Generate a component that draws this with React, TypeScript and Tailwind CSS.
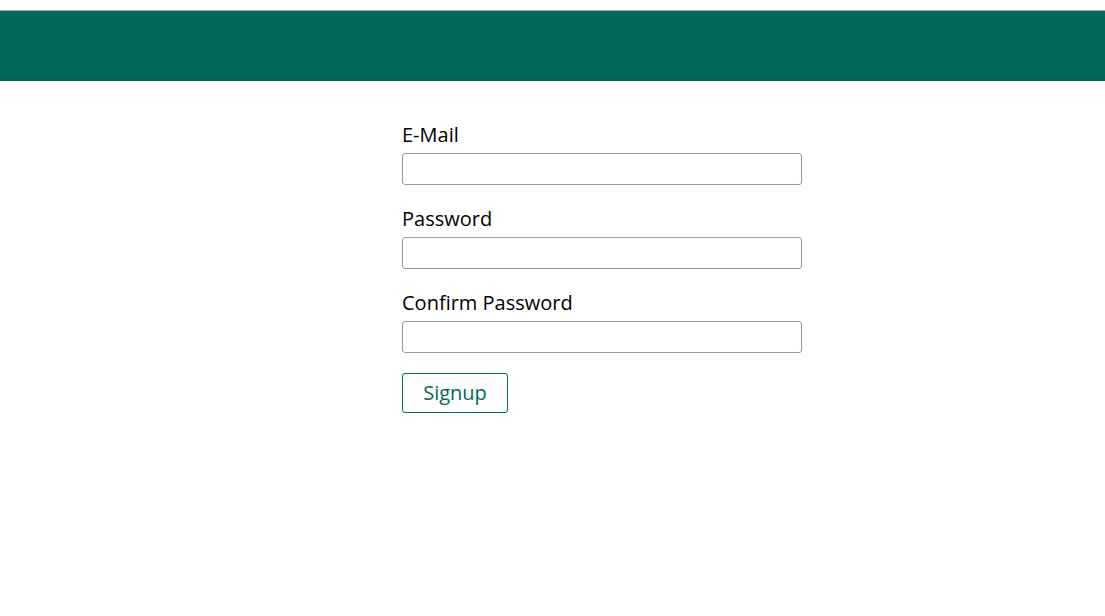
const fields = [
    { label: 'E-Mail', type: 'email' },
    { label: 'Password', type: 'password' },
    { label: 'Confirm Password', type: 'password' },
];

export default function App() {
    return (
        <div className="min-h-screen bg-white font-['Open_Sans',sans-serif] text-black">
            <div className="h-[10px]" />
            <header className="h-[71px] border-t border-[#a8a8a8] bg-[#00695c]" />
            <main className="pl-[402px] pt-[40px]">
                <form className="flex w-[400px] flex-col" onSubmit={(e) => e.preventDefault()}>
                    {fields.map((field) => (
                        <div key={field.label} className="mb-[20px] flex flex-col">
                            <label className="mb-[4px] text-[20px] leading-[28px]">{field.label}</label>
                            <input
                                type={field.type}
                                className="h-[32px] w-full rounded-[3px] border border-[#999999] px-2 outline-none"
                            />
                        </div>
                    ))}
                    <div>
                        <button
                            type="submit"
                            className="h-[40px] w-[106px] rounded-[3px] border border-[#00695c] text-[20px] text-[#00695c]"
                        >
                            Signup
                        </button>
                    </div>
                </form>
            </main>
        </div>
    );
}
